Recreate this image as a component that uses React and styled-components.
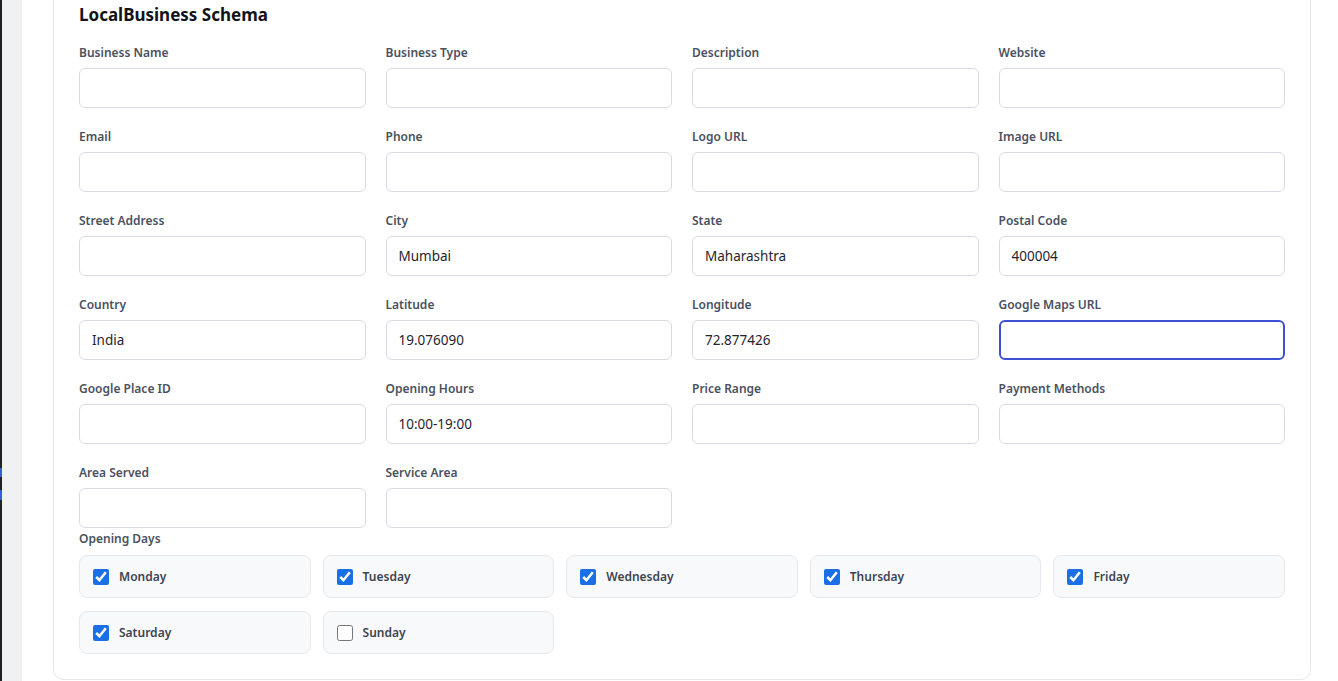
import React from "react";
import styled, {createGlobalStyle} from 'styled-components';

const GlobalStyle = createGlobalStyle`
  html, body {
    margin: 0;
    background: #ffffff;
    font-family: "Noto Sans", "Open Sans", sans-serif;
  }
  * { box-sizing: border-box; }
`

const Page = styled.div`
    display: flex;
    height: 100vh;
    overflow: hidden;
`

const EdgeBar = styled.div`
    width: 2px;
    background: #1f2124;
    display: flex;
    flex-direction: column;
`

const EdgeMark = styled.span`
    display: block;
    height: ${p => p.h}px;
    margin-top: ${p => p.top}px;
    background: #3a5bd9;
`

const Gutter = styled.div`
    width: 20px;
    background: #eff1f3;
`

const Main = styled.main`
    flex: 1;
    padding: 0 27px 0 31px;
`

const Card = styled.section`
    margin-top: -14px;
    border: 1px solid #e4e7eb;
    border-radius: 10px;
    padding: 16px 25px 25px;
    background: #fff;
`

const Title = styled.h2`
    margin: 0 0 17px;
    font-size: 17px;
    line-height: 24px;
    font-weight: 700;
    color: #111318;
`

const FieldGrid = styled.div`
    display: grid;
    grid-template-columns: repeat(4, 1fr);
    column-gap: 20px;
    row-gap: 20px;
`

const Field = styled.div`
    display: flex;
    flex-direction: column;
`

const Label = styled.label`
    font-size: 12px;
    line-height: 18px;
    font-weight: 600;
    color: #4a5160;
    margin-bottom: 6px;
`

const Input = styled.input`
    height: 40px;
    width: 100%;
    border: ${p => p.$focused ? '2px solid #3d50d4' : '1px solid #d8dce2'};
    border-radius: 6px;
    padding: 0 ${p => p.$focused ? 11 : 12}px;
    font-family: inherit;
    font-size: 13.5px;
    color: #1f2430;
    background: #fff;
    outline: none;
`

const DaysLabel = styled(Label)`
    display: block;
    margin: 2px 0 7px;
`

const DaysGrid = styled.div`
    display: grid;
    grid-template-columns: repeat(5, 1fr);
    column-gap: 12px;
    row-gap: 13px;
`

const DayItem = styled.label`
    height: 43px;
    display: flex;
    align-items: center;
    gap: 10px;
    padding: 0 13px;
    background: #f8f9fb;
    border: 1px solid #e6e9ed;
    border-radius: 8px;
    font-size: 12px;
    font-weight: 600;
    color: #3d4452;
`

const Check = styled.input`
    width: 16px;
    height: 16px;
    margin: 0;
    accent-color: #1a6fe6;
`

const fields = [
    ['Business Name', ''], ['Business Type', ''], ['Description', ''], ['Website', ''],
    ['Email', ''], ['Phone', ''], ['Logo URL', ''], ['Image URL', ''],
    ['Street Address', ''], ['City', 'Mumbai'], ['State', 'Maharashtra'], ['Postal Code', '400004'],
    ['Country', 'India'], ['Latitude', '19.076090'], ['Longitude', '72.877426'], ['Google Maps URL', '', true],
    ['Google Place ID', ''], ['Opening Hours', '10:00-19:00'], ['Price Range', ''], ['Payment Methods', ''],
    ['Area Served', ''], ['Service Area', ''],
];

const days = [
    ['Monday', true], ['Tuesday', true], ['Wednesday', true], ['Thursday', true], ['Friday', true],
    ['Saturday', true], ['Sunday', false],
];

const App = () => {
    return <Page>
        <GlobalStyle/>
        <EdgeBar>
            <EdgeMark top={468} h={9}/>
            <EdgeMark top={13} h={10}/>
        </EdgeBar>
        <Gutter/>
        <Main>
            <Card>
                <Title>LocalBusiness Schema</Title>
                <FieldGrid>
                    {fields.map(([name, value, focused]) => (
                        <Field key={name}>
                            <Label>{name}</Label>
                            <Input defaultValue={value} $focused={focused}/>
                        </Field>
                    ))}
                </FieldGrid>
                <DaysLabel>Opening Days</DaysLabel>
                <DaysGrid>
                    {days.map(([day, checked]) => (
                        <DayItem key={day}>
                            <Check type="checkbox" defaultChecked={checked}/>
                            {day}
                        </DayItem>
                    ))}
                </DaysGrid>
            </Card>
        </Main>
    </Page>
}

export default App;
